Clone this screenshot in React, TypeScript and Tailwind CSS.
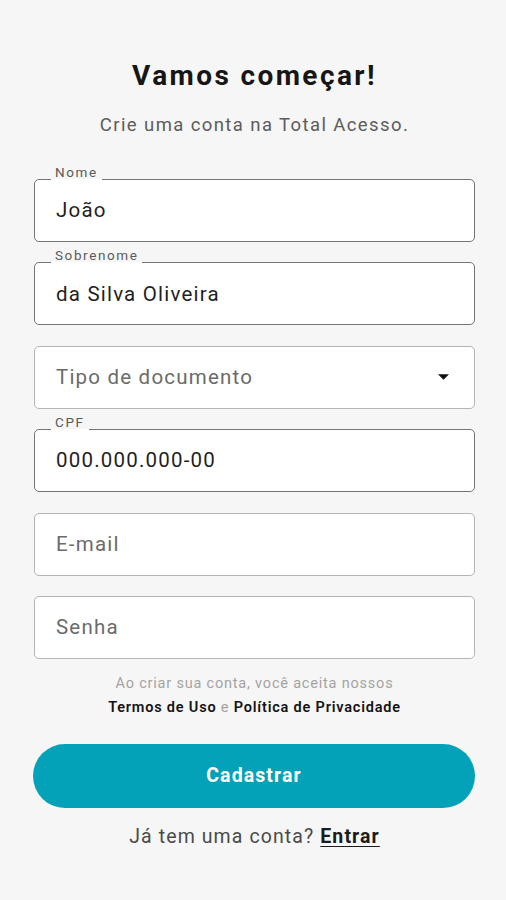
import { ReactNode } from "react";

interface FieldProps {
    label?: string;
    value?: string;
    placeholder?: string;
    trailing?: ReactNode;
}

function Field({ label, value, placeholder, trailing }: FieldProps) {
    const filled = !!value;
    return (
        <div
            className={`relative flex h-[63px] items-center rounded-[5px] border bg-white pl-[21px] pr-[25px] ${
                filled ? "border-[#747474]" : "border-[#b4b4b4]"
            }`}
        >
            {/* label sitting on the top border */}
            {label && (
                <span className="absolute -top-[16px] left-[16px] bg-[linear-gradient(to_bottom,#f6f6f6_15px,#ffffff_15px)] px-[4px] text-[13.5px] leading-[16px] tracking-[1.6px] text-[#5a5a5a]">
                    {label}
                </span>
            )}
            <span
                className={`flex-1 text-[20.5px] tracking-[1.2px] ${
                    filled ? "text-[#1f1f1f]" : "text-[#6b6b6b]"
                }`}
            >
                {value || placeholder}
            </span>
            {trailing}
        </div>
    );
}

export default function App() {
    return (
        <div className="min-h-[900px] bg-[#f6f6f6] pl-[34px] pr-[31px] pt-[59px] font-['Roboto',sans-serif]">
            <h1 className="text-center text-[28px] font-bold leading-[34px] tracking-[2.4px] text-[#161616]">
                Vamos começar!
            </h1>
            <p className="mt-[20px] text-center text-[18.5px] leading-[24px] tracking-[1.4px] text-[#5c5c5c]">
                Crie uma conta na Total Acesso.
            </p>

            <div className="mt-[42px] flex flex-col gap-[20.4px]">
                <Field label="Nome" value="João" />
                <Field label="Sobrenome" value="da Silva Oliveira" />
                <Field
                    placeholder="Tipo de documento"
                    trailing={
                        <svg width="11" height="6" viewBox="0 0 10 5">
                            <path d="M0 0 L10 0 L5 5 Z" fill="#111" />
                        </svg>
                    }
                />
                <Field label="CPF" value="000.000.000-00" />
                <Field placeholder="E-mail" />
                <Field placeholder="Senha" />
            </div>

            <div className="mt-[13px] text-center text-[14.5px] leading-[24px] tracking-[0.8px]">
                <p className="text-[#a3a3a3]">Ao criar sua conta, você aceita nossos</p>
                <p className="font-semibold text-[#141414]">
                    Termos de Uso <span className="font-normal text-[#a3a3a3]">e</span>{" "}
                    Política de Privacidade
                </p>
            </div>

            <button className="mt-[24px] -ml-[1px] flex h-[64px] w-[calc(100%+1px)] items-center justify-center rounded-full bg-[#03a2b8] text-[19.5px] font-bold tracking-[1.1px] text-white">
                Cadastrar
            </button>

            <p className="mt-[17px] text-center text-[19.5px] leading-[24px] tracking-[1.1px] text-[#4a4a4a]">
                Já tem uma conta?{" "}
                <span className="font-bold text-[#1c1c1c] underline underline-offset-[3px]">Entrar</span>
            </p>
        </div>
    );
}
